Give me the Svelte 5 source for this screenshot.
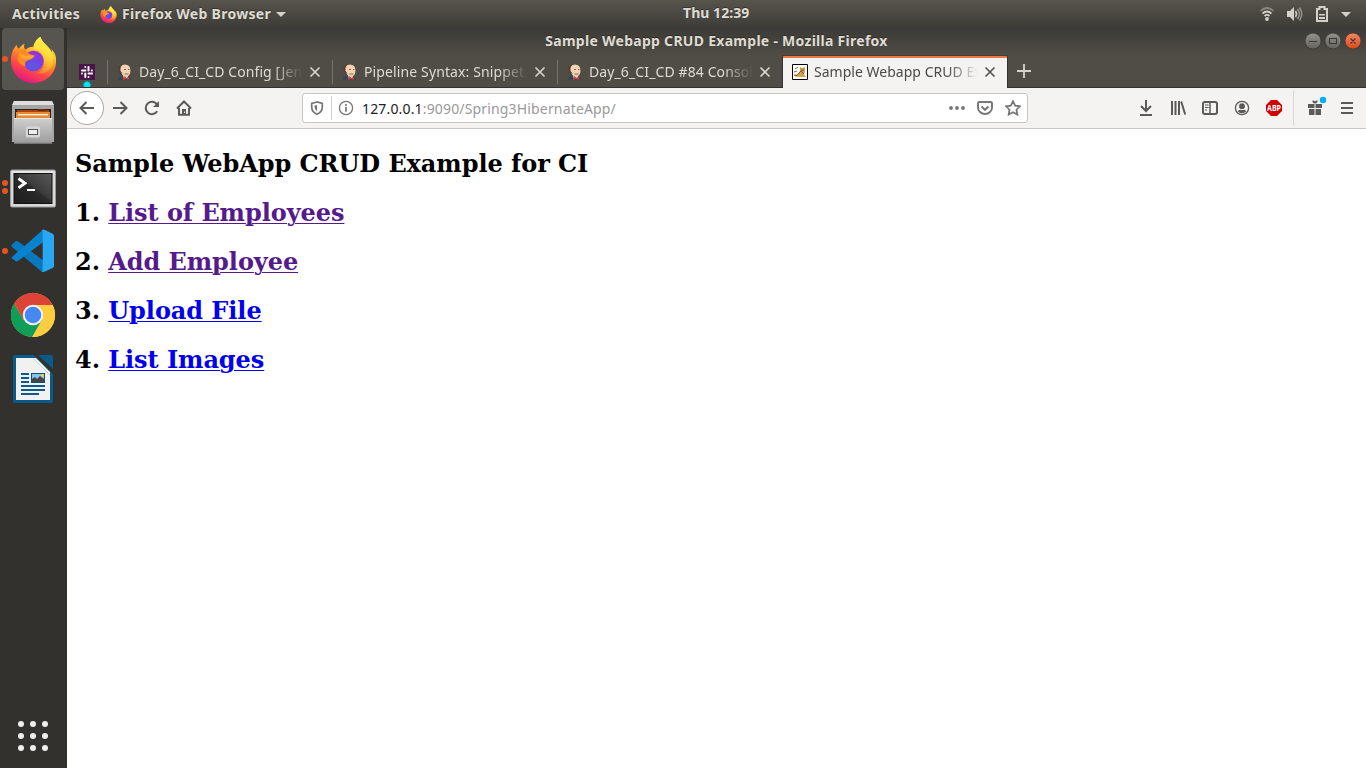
<script>
  const tabs = [
    { title: 'Day_6_CI_CD Config [Jenkins]', icon: 'jenkins', spacing: 0.09 },
    { title: 'Pipeline Syntax: Snippet Generator', icon: 'jenkins', spacing: 0.12 },
    { title: 'Day_6_CI_CD #84 Console', icon: 'jenkins', spacing: 0.11 },
    { title: 'Sample Webapp CRUD Example', icon: 'tomcat', active: true, spacing: 0.02 }
  ];
  const links = [
    { label: 'List of Employees', visited: true },
    { label: 'Add Employee', visited: true },
    { label: 'Upload File' },
    { label: 'List Images' }
  ];
  const dock = [
    { name: 'firefox', windows: 1, active: true },
    { name: 'files', windows: 0 },
    { name: 'terminal', windows: 2 },
    { name: 'code', windows: 1 },
    { name: 'chrome', windows: 0 },
    { name: 'writer', windows: 0 }
  ];
  const tools = ['download', 'library', 'sidebar', 'account', 'abp'];
</script>

{#snippet firefox(size, id)}
  <svg width={size} height={size} viewBox="0 0 48 48">
    <defs>
      <linearGradient id="{id}body" x1=".8" y1="0" x2=".35" y2="1">
        <stop offset="0" stop-color="#fff44f" /><stop offset=".32" stop-color="#ffc72e" />
        <stop offset=".5" stop-color="#ff8a2c" /><stop offset=".72" stop-color="#ff4a45" /><stop offset="1" stop-color="#e31587" />
      </linearGradient>
      <radialGradient id="{id}globe" cx=".45" cy=".75" r=".8">
        <stop offset="0" stop-color="#5b5be0" /><stop offset=".5" stop-color="#7542e5" /><stop offset="1" stop-color="#a22bd5" />
      </radialGradient>
      <linearGradient id="{id}flame" x1=".8" y1="0" x2=".5" y2="1">
        <stop offset="0" stop-color="#fff44f" /><stop offset=".45" stop-color="#ffe03c" /><stop offset=".75" stop-color="#ffb02b" /><stop offset="1" stop-color="#ff7a36" />
      </linearGradient>
    </defs>
    <path fill="url(#{id}body)" d="M46 19c-1-3-3-5-4-6 1 2 1 3 1 4C40 10 34 8 31 1c-4 2-7 7-7 10-4 0-7 2-8 3-2-1-2-4-1-6-3 1-5 4-6 5-2-1-2-3-2-4C3 13 1 18 1 25c0 13 10 23 23 23s23-10 23-22c0-3 0-5-1-7z" />
    <circle cx="24" cy="25.500" r="10.5" fill="url(#{id}globe)" />
    <path fill="url(#{id}flame)" d="M31 1c-4 2-7 7-7 13 6 0 10 4 11 11 1 7-3 11-8 13 10 2 16-4 17-12 0-5-1-8-3-11-3-5-8-7-10-14z" />
    <path fill="#ff8b24" d="M9 14c3-1 5-1 7 0 1 2 3 4 5 5l4 1c0 3-4 4-7 5-3 1-3 4-2 6-5-1-8-4-8-8 0-3 1-6 1-9z" />
    <path fill="#ffb032" d="M9 17c3 3 6 3 9 3l7 0c-2 3-5 3-8 4-4 0-6-3-8-7z" opacity=".8" />
  </svg>
{/snippet}

{#snippet app(name)}
  {#if name === 'firefox'}
    {@render firefox(47, 'ff')}
  {:else if name === 'files'}
    <svg width="48" height="48" viewBox="0 0 48 48">
      <defs><linearGradient id="cab" x2="0" y2="1"><stop stop-color="#cfcfcf" /><stop offset="1" stop-color="#9c9c9c" /></linearGradient></defs>
      <path fill="#a5a5a5" d="M5 2h38l2 5v36H3V7z" /><path fill="#dedede" d="M5 2h38l2 4H3z" />
      <path fill="#282420" d="M6 10h36v10H6z" /><path fill="#aa420b" d="M8 11h32v4H8z" /><path fill="#6b2b0d" d="M29 10h9v2h-9z" />
      <path fill="#e88933" d="M7 13h34v7H7z" /><path fill="#fff0dc" d="M9 15h30v1.4H9z" />
      <path fill="url(#cab)" d="M5 19h38v25.500H5z" /><path stroke="#e7e7e7" d="M5 19.500h38" /><path fill="#838383" d="M5 43.500h38v1H5z" />
      <rect x="17" y="27.500" width="14" height="11" rx="1.500" fill="#d6d6d6" />
      <rect x="19.500" y="30.500" width="9" height="5" fill="#eee" stroke="#555" />
    </svg>
  {:else if name === 'terminal'}
    <svg width="48" height="48" viewBox="0 0 48 48">
      <defs><linearGradient id="term" x1="1" x2="0" y2="1"><stop stop-color="#5a5a5a" /><stop offset=".45" stop-color="#3b3b3b" /><stop offset=".5" stop-color="#2b2b2b" /><stop offset="1" stop-color="#1c1c1c" /></linearGradient></defs>
      <rect x="1.500" y="7" width="45" height="37" rx="1.500" fill="#d8d8d8" stroke="#9b9b9b" />
      <path stroke="#f4f4f4" d="M3 9h42" /><rect x="5" y="10.500" width="38" height="30" fill="url(#term)" stroke="#111" />
      <path d="m9.500 15.500 6.500 4.700-6.500 4.700" fill="none" stroke="#fff" stroke-width="2.900" /><path fill="#fff" d="M18 26h8v2h-8z" />
    </svg>
  {:else if name === 'code'}
    <svg width="48" height="48" viewBox="0 0 48 48">
      <path fill="#0879bf" d="m3 17.500 3.500-3.200q1-.8 2.300 0L35 34v11q-2 0-3-1L3 20q-1.200-1.300 0-2.500z" />
      <path fill="#0a83cf" d="m3 30 29-25.500Q33 3 35 3v11.500L8.800 34q-1.300.8-2.300 0L3 31.500Q2 30.800 3 30z" />
      <path fill="#28a8f2" d="M32 44q2 1.500 4 .5l8-3.800q1-.5 1-2V9q0-1.500-1-2l-8-3.900q-2-1.200-4 .4 1.700-.6 1.700 1.500v38q0 1.600-1.700 1z" />
    </svg>
  {:else if name === 'chrome'}
    <svg width="46" height="46" viewBox="0 0 48 48">
      <circle cx="24" cy="24" r="23" fill="#ffcd40" />
      <path fill="#db4437" d="M24 24 4 12.500A23 23 0 0 1 44.500 13.500H24z" />
      <path fill="#0f9d58" d="m24 24-9.500 5.500L4.300 12A23 23 0 0 0 23.200 47L33.500 29z" />
      <path fill="#db4437" d="M4.300 12 14.500 29.500 24 13.500z" />
      <path fill="#ffcd40" d="M24 13.500h20.500A23 23 0 0 1 23.200 47L33.500 29.300z" />
      <circle cx="24" cy="24" r="10.700" fill="#f1f1f1" /><circle cx="24" cy="24" r="8.600" fill="#4688f1" />
    </svg>
  {:else}
    <svg width="48" height="48" viewBox="0 0 48 48">
      <path fill="#0b5a8c" d="M6 0h19l19 19v27q0 2-2 2H6q-2 0-2-2V2q0-2 2-2z" />
      <path fill="#f1f1f1" d="M7 3h17l17 17v25H7z" /><path fill="#fff" d="M24 3h3l14 14v3z" />
      <path fill="#0b5a8c" d="M29 0h13q2 0 2 2v12z" />
      <path stroke="#0b5a8c" stroke-width="2" d="M12 19h8m-8 4h8m-8 4h8m-8 4h24m-24 4h24m-24 4h18" />
      <path fill="#0b4f7c" d="M22 18h14v10H22z" /><path fill="#83c5ec" d="M23 19h12v5H23z" />
      <path fill="#444" d="M23 27v-3l3-2 2 2 3-3 4 3v3z" /><circle cx="33.500" cy="20.500" r="1.400" fill="#ffd13b" />
    </svg>
  {/if}
{/snippet}

{#snippet tool(name)}
  <svg class="glyph" width="16" height="16" viewBox="0 0 16 16">
    {#if name === 'back'}
      <path d="M15 8H1.500M7.500 2 1.500 8l6 6" />
    {:else if name === 'forward'}
      <path d="M1 8h13.500M8.500 2l6 6-6 6" />
    {:else if name === 'reload'}
      <path d="M13.200 11.200A6.200 6.200 0 1 1 13 4.400" /><path class="solid" d="M15 1v6H9z" />
    {:else if name === 'home'}
      <path d="M1 8.500 8 1.500l7 7M3 8v6.800h10V8" /><path class="solid" d="M6 9h4v6H6z" /><path class="cut" d="M8 11.500h1v1.500H8z" />
    {:else if name === 'download'}
      <path d="M8 0v11M3 6l5 5 5-5M2 15h12" />
    {:else if name === 'library'}
      <path d="M2 1v14M5.500 1v14M9 1v14M11.200 1.500l4 13" />
    {:else if name === 'sidebar'}
      <rect x="1" y="2" width="14" height="12" rx="2" /><path d="M8 2v12" stroke-width="1.500" /><path d="M3 5h3.500M3 7.500h3.500M3 10h2" stroke-width="1" />
    {:else if name === 'account'}
      <circle cx="8" cy="8" r="6.600" stroke-width="1.300" /><circle class="solid" cx="8" cy="6.200" r="2.900" /><path class="solid" d="M3.700 11.200q1-1.600 2.500-1.500 1.800.7 3.600 0 1.500-.1 2.500 1.500Q10.500 13.300 8 13.300T3.700 11.200z" />
    {:else if name === 'shield'}
      <path d="M8 2 2.700 3.500V7c0 3.500 2.300 6 5.300 7.200 3-1.200 5.300-3.700 5.300-7.200V3.500z" stroke-width="1.700" /><path class="solid" d="M8 5v6.500Q5.400 9.500 5.400 6V5.700z" />
    {:else if name === 'info'}
      <circle cx="8" cy="8" r="6.600" stroke-width="1.300" /><path d="M8 7v4.800M8 4v1.700" stroke-width="1.700" />
    {:else if name === 'dots'}
      <circle class="solid" cx="2" cy="8" r="1.900" /><circle class="solid" cx="8" cy="8" r="1.900" /><circle class="solid" cx="14" cy="8" r="1.900" />
    {:else if name === 'pocket'}
      <path d="M2.400 2h11.200q1.400 0 1.400 1.400v4a7 6.600 0 0 1-14 0v-4Q1 2 2.400 2z" /><path d="m4.500 6.500 3.500 3.300 3.500-3.300" />
    {:else if name === 'star'}
      <path d="m8 1.200 2.100 4.400 4.900.7-3.500 3.400.8 4.900L8 12.300l-4.300 2.300.8-4.900L1 6.300l4.900-.7z" stroke-width="1.800" />
    {:else if name === 'menu'}
      <path d="M2 3h12M2 8h12M2 13h12" />
    {/if}
  </svg>
{/snippet}

{#snippet jenkins()}
  <svg width="16" height="16" viewBox="0 0 16 16">
    <path fill="#34485b" d="M1.500 13q3-2 5-1h4q3 1 4 4H1q0-2 .5-3z" />
    <path fill="#4e3829" d="M1.500 4Q3 0 8 0q5.500 0 6 6l-1 5-6 2-4-3z" />
    <path fill="#f2d2b5" d="M3.500 4Q4 .5 8 .5q5.500 0 5.500 6 0 5-4 6.500-3.500 0-5-3.500L3 7z" />
    <path stroke="#5e4333" fill="none" d="M2.500 3.500 3 7l2 2.500" /><path fill="#8b6c55" d="M7 5h2v1H7zM11 5h1.500v1H11zM7.500 9.500h4v1h-4z" />
    <path fill="#eee" d="m6 12 2 2 3-2v3H6z" /><path fill="#d33833" d="m6 13 3 1 3-1.500V16l-3-1-3 1z" />
  </svg>
{/snippet}

<div class="desktop">
  <header class="panel">
    <span class="activities">Activities</span>
    <span class="appmenu">{@render firefox(17, 'mini')}<span>Firefox Web Browser</span><i class="caret"></i></span>
    <span class="clock">Thu 12:39</span>
    <div class="status">
      <svg width="16" height="16" viewBox="0 0 16 16" fill="none" stroke="#d3d1ca" stroke-width="1.700"><path opacity=".45" d="M1.500 5q6.500-6 13 0" /><path d="M3.500 7.500q4.500-4 9 0M5.500 10q2.500-2.200 5 0" /><circle cx="8" cy="13" r="1.900" fill="#d3d1ca" stroke="none" /></svg>
      <svg width="16" height="16" viewBox="0 0 16 16" fill="none" stroke="#d3d1ca" stroke-width="1.500"><path fill="#d3d1ca" stroke="none" d="M0 5h3l4-4v14l-4-4H0z" /><path d="M8.500 5q2 3 0 6" /><path opacity=".55" d="M10.500 3q3.500 5 0 10M12.500 1.500q4.500 6.500 0 13" /></svg>
      <svg width="14" height="16" viewBox="0 0 14 16"><path fill="none" stroke="#d3d1ca" stroke-width="2" d="M2 3h2.500V1h5v2H12v12H2z" /><path fill="#d3d1ca" d="M4 8h6v1.500H4zM4 11h6v2H4z" /></svg>
      <i class="caret"></i>
    </div>
  </header>

  <div class="workspace">
    <aside>
      <div class="apps">
        {#each dock as item}
          <div class="tile" class:active={item.active}>
            <div class="pips">{#each Array(item.windows) as _}<i></i>{/each}</div>
            {@render app(item.name)}
          </div>
        {/each}
      </div>
      <div class="grid">{#each Array(9) as _}<i></i>{/each}</div>
    </aside>

    <main>
      <div class="chrome">
        <div class="titlebar">
          <b>Sample Webapp CRUD Example - Mozilla Firefox</b>
          <div class="controls">
            <svg width="56" height="18" viewBox="0 0 56 18">
              <defs>
                <linearGradient id="grey" x2="0" y2="1"><stop stop-color="#92918c" /><stop offset="1" stop-color="#65635d" /></linearGradient>
                <linearGradient id="orange" x2="0" y2="1"><stop stop-color="#f58766" /><stop offset="1" stop-color="#de4816" /></linearGradient>
              </defs>
              <g stroke="#34332f" stroke-width=".7"><circle cx="8" cy="9" r="8" fill="url(#grey)" /><circle cx="28" cy="9" r="8" fill="url(#grey)" /><circle cx="48" cy="9" r="8" fill="url(#orange)" /></g>
              <path fill="none" stroke="#3a3935" d="M4 9.500h8M24.500 6.500h7v5h-7zM45.500 6.500l5 5m0-5-5 5" stroke-width="1.100" />
            </svg>
          </div>
        </div>
        <div class="tabs">
          <div class="pinned">
            <svg width="16" height="16" viewBox="0 0 16 16"><path fill="#4a154b" d="M0 0h16v16H0z" /><path fill="none" stroke="#fff" stroke-width="2" stroke-linecap="round" d="M6.300 3v.1M9.500 3v3.500M3 6.400h3.500M12.800 6.400h.1M3 9.600h.1M9.500 9.600H13M6.300 9.600V13M9.500 12.900v.1" /></svg>
            <i></i>
          </div>
          {#each tabs as tab}
            <div class="tab" class:selected={tab.active}>
              {#if tab.icon === 'jenkins'}
                {@render jenkins()}
              {:else}
                <svg width="16" height="16" viewBox="0 0 16 16"><path fill="#fff" stroke="#000" d="M.5.500h15v15H.5z" /><path fill="#d2a052" d="m8 3 1.500 1L11 4l2-1.500V8l-1 2 2 3H8l-5-.5L2 11l4-1 2-3z" /><path fill="none" stroke="#654314" stroke-width=".8" d="M2 11q3 2 5-2l2-2 3 3M3 5l3-2M2 8l3-1M9 6l3 0" /></svg>
              {/if}
              <span style:letter-spacing="{tab.spacing}px">{tab.title}</span>
              <svg class="close" width="12" height="12" viewBox="0 0 12 12"><path d="m1.500 1.500 9 9m0-9-9 9" /></svg>
            </div>
          {/each}
          <svg class="add" width="16" height="16" viewBox="0 0 16 16"><path d="M8 1v14M1 8h14" /></svg>
        </div>
      </div>

      <nav>
        <div class="left">
          <span class="cell back">{@render tool('back')}</span>
          {#each ['forward', 'reload', 'home'] as name}<span class="cell">{@render tool(name)}</span>{/each}
        </div>
        <div class="url">
          <span class="cell shield">{@render tool('shield')}</span>
          <span class="cell info">{@render tool('info')}</span>
          <p>127.0.0.1<em>:9090/Spring3HibernateApp/</em></p>
          {#each ['dots', 'pocket', 'star'] as name}<span class="cell small">{@render tool(name)}</span>{/each}
        </div>
        <div class="right">
          {#each tools as name}
            <span class="cell">
              {#if name === 'abp'}
                <svg width="16" height="16" viewBox="0 0 16 16"><path fill="#d00000" d="M5 0h6l5 5v6l-5 5H5l-5-5V5z" /><text x="1" y="11" font-size="8.500" font-weight="700" fill="#fff" textLength="14" lengthAdjust="spacingAndGlyphs">ABP</text></svg>
              {:else}{@render tool(name)}{/if}
            </span>
          {/each}
          <i class="divider"></i>
          <span class="cell gift">
            <svg width="20" height="20" viewBox="0 0 20 20"><path fill="#5b5a58" d="M1 9h6.500v4H1zM8.500 9H15v4H8.500zM2 14h5.500v6H2zM8.500 14H14v6H8.500zM8 8.500Q5 8 5.500 5.500 7 5 8 6.500q1-1.500 2.500-1Q11 8 8 8.500z" /><circle cx="16" cy="5" r="3.200" fill="#00aef5" /></svg>
          </span>
          <span class="cell burger">{@render tool('menu')}</span>
        </div>
      </nav>

      <article>
        <h2>Sample WebApp CRUD Example for CI</h2>
        {#each links as link, i}
          <h2>{i + 1}. <a href="#top" class:visited={link.visited}>{link.label}</a></h2>
        {/each}
      </article>
    </main>
  </div>
</div>

<style>
  :global(body) { overflow: hidden; }
  * { box-sizing: border-box; }
  svg { display: block; flex: none; }
  .desktop { width: 1366px; height: 768px; display: flex; flex-direction: column; font: 14px/20px "Noto Sans", "Open Sans", sans-serif; background: #fff; }
  .panel { height: 28px; flex: none; display: grid; grid-template-columns: 100px 583px 67px 1fr 100px; align-items: center; background: linear-gradient(#57544c, #3d3c37); color: #dfdbd2; font-weight: 700; text-shadow: 0 -1px #33322e; }
  .activities { padding-left: 12px; letter-spacing: .3px; }
  .appmenu { display: flex; align-items: center; gap: 5px; }
  .appmenu span { letter-spacing: .3px; }
  .caret { width: 0; border: 5px solid transparent; border-top-color: #d3d1ca; border-bottom: 0; }
  .clock { white-space: nowrap; position: relative; top: -1px; letter-spacing: .05px; }
  .panel .status { grid-column: 5; display: flex; align-items: center; gap: 12px; margin-left: -7px; }
  .status .caret { margin-left: 0; }
  .workspace { flex: 1; min-height: 0; display: flex; }
  aside { width: 67px; flex: none; background: #33312d; display: flex; flex-direction: column; justify-content: space-between; }
  .apps { display: flex; flex-direction: column; gap: 2px; padding-left: 2px; }
  .tile { width: 62px; height: 62px; border-radius: 4px; display: grid; place-items: center; position: relative; }
  .tile.active { background: #565550; }
  .pips { position: absolute; left: 0; top: 0; height: 100%; display: flex; flex-direction: column; justify-content: center; gap: 2px; }
  .pips i { width: 6px; height: 6px; border-radius: 50%; background: #e95420; }
  .grid { display: grid; grid-template-columns: repeat(3, 6px); gap: 6px; padding: 0 0 17px 18px; }
  .grid i { width: 6px; height: 6px; border-radius: 50%; background: #eeeeec; }
  main { flex: 1; min-width: 0; display: flex; flex-direction: column; }
  .chrome { height: 60px; flex: none; background: linear-gradient(#3b3a36, #504d46 28px); border-bottom: 1px solid #33322e; }
  .titlebar { height: 28px; display: grid; grid-template-columns: 1fr auto 1fr; align-items: center; color: #dfdbd2; text-shadow: 0 -1px #2d2c29; }
  .titlebar b { grid-column: 2; position: relative; top: -1px; letter-spacing: .28px; }
  .controls { justify-self: end; padding-right: 5px; position: relative; top: -1px; }
  .tabs { height: 32px; display: flex; }
  .pinned { width: 40px; padding: 8px 0 0 12px; display: flex; flex-direction: column; height: 31px; overflow: hidden; }
  .pinned i { width: 10px; height: 10px; margin: 0 0 0 3px; flex: none; border-radius: 50%; background: radial-gradient(#00e8ff 35%, #1b7778 55%, transparent 72%); }
  .tab { width: 225px; padding: 0 10px; display: flex; align-items: center; color: #dfdbd2; background: linear-gradient(#777469, #777469) 0 4px / 1px 24px no-repeat; }
  .tab span { width: 164px; margin-left: 6px; white-space: nowrap; overflow: hidden; mask-image: linear-gradient(90deg, #000 134px, transparent 164px); }
  .tab .close { margin-left: 6px; stroke: #d6d3cc; stroke-width: 1.700; }
  .tab.selected { width: 226px; padding-left: 9px; background: #f4f3f2; color: #4a4a4a; border: solid #33322e; border-width: 0 1px; box-shadow: inset 0 2px #f07746, 0 -1px #3f3e39; }
  .tab.selected .close { stroke: #555; }
  .add { margin: 7px 0 0 8px; stroke: #d6d3cc; stroke-width: 1.800; }
  nav { height: 41px; flex: none; background: #f4f3f2; border-bottom: 1px solid #cbc9c6; display: grid; grid-template-columns: 235px 726px 1fr; align-items: center; }
  .left, .right { display: flex; align-items: center; }
  .left { padding-left: 3px; }
  .cell { width: 32px; flex: none; display: grid; place-items: center; }
  .glyph { fill: none; stroke: #5b5a58; stroke-width: 2; }
  .glyph .solid { fill: #5b5a58; stroke: none; }
  .glyph .cut { fill: #f4f3f2; stroke: none; }
  .back { width: 34px; height: 34px; background: #fff; border: 1px solid #aaa8a5; border-radius: 50%; }
  .url { height: 30px; border: 1px solid #c7c5c2; border-radius: 3px; background: #fff; display: flex; align-items: center; }
  .url .glyph { stroke: #777; }
  .url .glyph .solid { fill: #777; }
  .shield { width: 29px; height: 24px; border-right: 1px solid #d2d2d2; }
  .info { width: 28px; }
  .url p { flex: 1; margin: 0 0 0 2px; color: #222; white-space: nowrap; letter-spacing: .16px; position: relative; top: 1px; }
  .url em { font-style: normal; color: #999; }
  .small { width: 28px; }
  .right { justify-content: flex-end; padding-right: 3px; }
  .right text { font-family: "Noto Sans", sans-serif; }
  .divider { width: 1px; height: 34px; background: #d8d6d4; margin: 0 7px 0 3px; }
  .gift { position: relative; top: -3px; margin-right: -2px; }
  article { flex: 1; background: #fff; padding: 0 8px; color: #000; font-family: "DejaVu Serif", serif; }
  h2 { margin: 0; font-size: 24px; line-height: 29px; font-weight: 700; padding-top: 20px; letter-spacing: -.06px; }
  a { color: #00e; text-decoration: underline; text-decoration-thickness: 1px; text-underline-offset: 2px; }
  a.visited { color: #551a8b; }
</style>
